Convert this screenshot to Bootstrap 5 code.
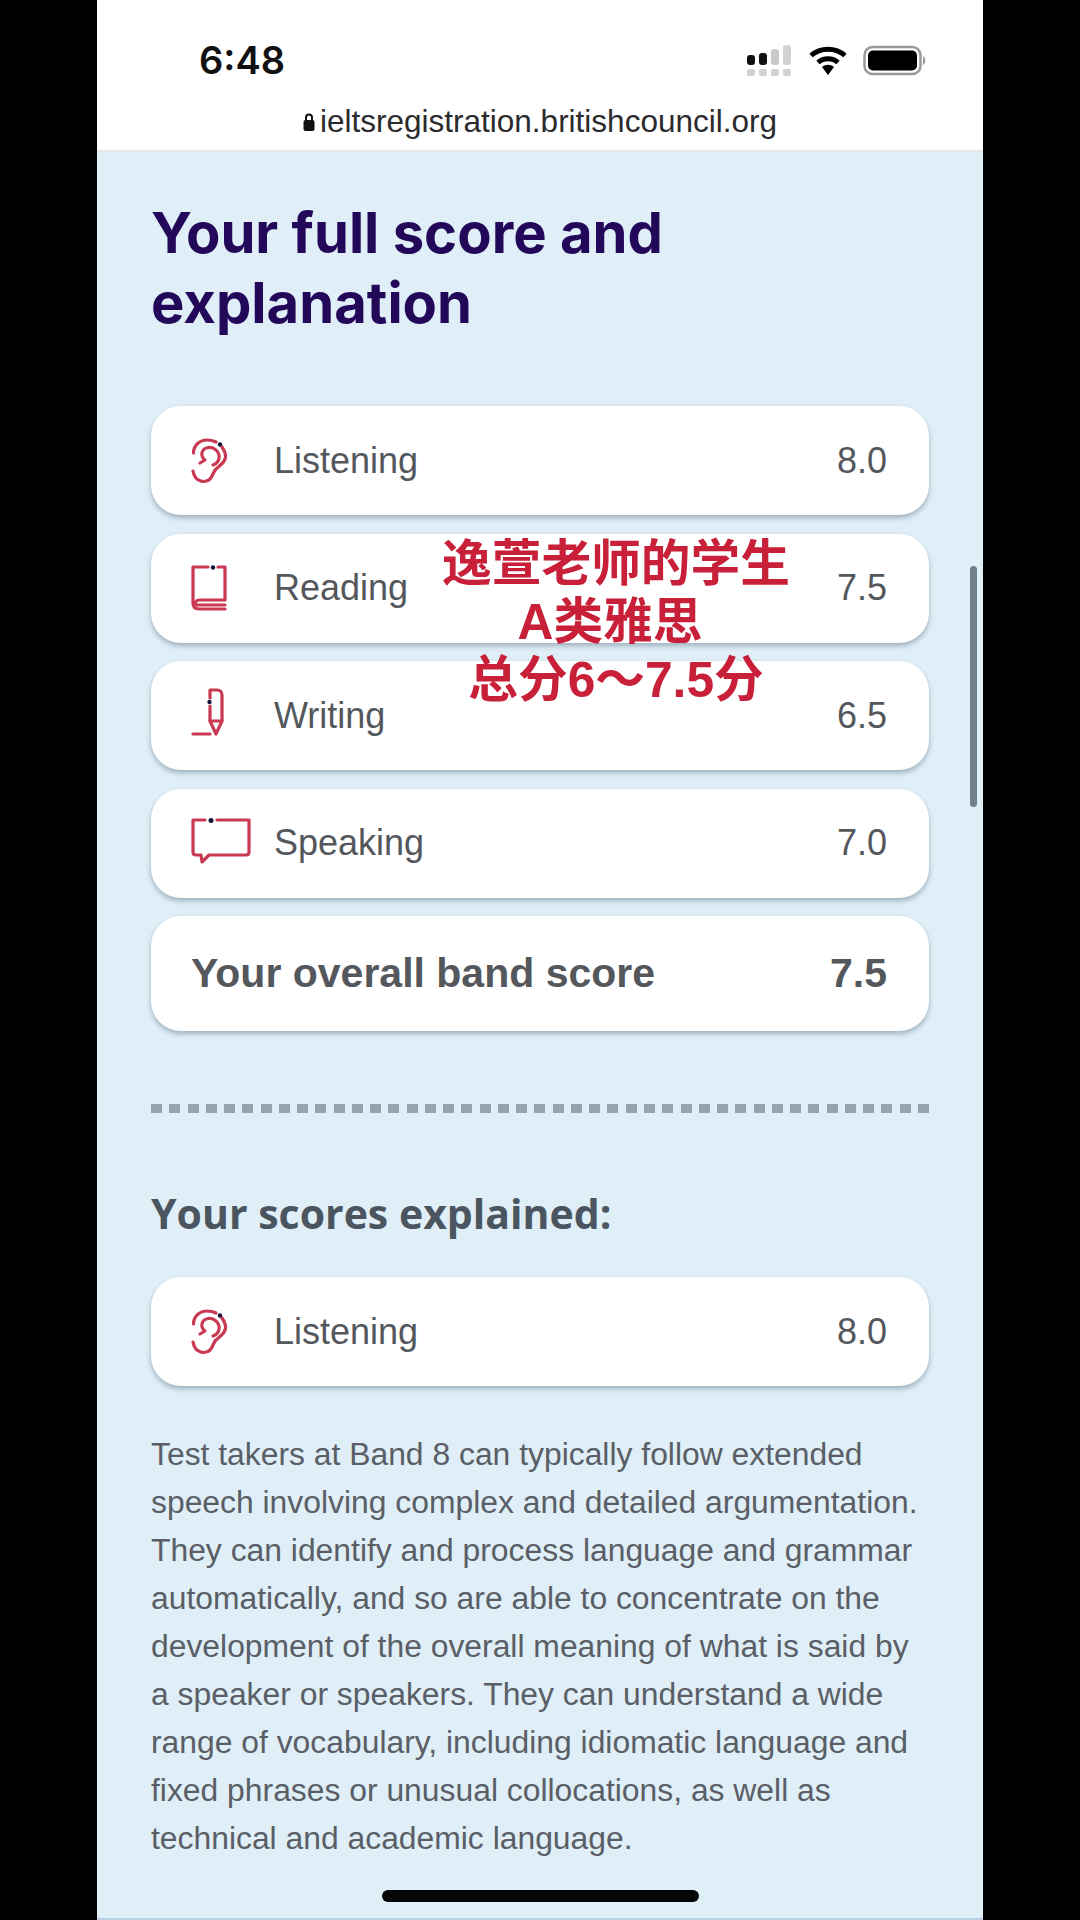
<!DOCTYPE html>
<html lang="en">
<head>
    <meta charset="UTF-8">
    <meta name="viewport" content="width=device-width, initial-scale=1.0">
    <title>IELTS score</title>
    <link href="https://cdn.jsdelivr.net/npm/bootstrap@5.3.0/dist/css/bootstrap.min.css" rel="stylesheet">
    <style>
        body { background: #000; font-family: "Liberation Sans", sans-serif; color: #54575c; }
        .phone { width: 886px; height: 1920px; margin-left: 97px; background: #dfeef7; position: relative; overflow: hidden; border-bottom: 2px solid #b9d0e2; }
        .top-bar { height: 152px; background: #fff; border-bottom: 2px solid #e3e8ea; }
        .status-row { height: 106px; padding: 41px 56px 0 102px; }
        .clock { font-family: Inter, sans-serif; font-weight: 600; font-size: 38px; line-height: 1; color: #111; }
        .url-row { font-size: 31.5px; line-height: 1; color: #2b2b2d; gap: 5px; }
        .content-area { padding: 0 54px; }
        .page-title { font-family: Inter, sans-serif; font-weight: 700; font-size: 56.2px; line-height: 70px; color: #23085a; margin: 46px 0 68px; }
        .score-list { gap: 18.5px; }
        .score-card { height: 109px; border: 0; border-radius: 30px; box-shadow: 0 3px 5px rgba(85, 105, 125, .45); padding: 0 42px 0 40px; font-size: 36px; }
        .score-card.total { height: 115px; font-size: 41px; font-weight: 700; }
        .icon-slot { width: 83px; flex: none; }
        .dash-line { height: 9px; margin: 73px 0 70px; background: repeating-linear-gradient(90deg, #95a3ad 0 11px, transparent 11px 18.26px); }
        .sub-title { font-weight: 700; font-size: 41px; line-height: 60px; color: #4b5560; margin-bottom: 34px; font-family: "Open Sans", sans-serif; }
        .band-text { font-size: 31.85px; line-height: 48px; margin: 44px 0 0; color: #5a5e66; }
        .red-note { position: absolute; left: 289px; top: 535px; width: 460px; font-family: "Liberation Sans", "Noto Sans CJK SC", sans-serif; font-weight: 700; font-size: 49.7px; line-height: 58px; color: #c9203a; }
        .note-mid { margin-right: 12px; }
        .scroll-thumb { position: absolute; right: 6px; top: 566px; width: 7px; height: 241px; border-radius: 4px; background: #70808c; }
        .home-bar { position: absolute; left: 285px; top: 1890px; width: 317px; height: 12px; border-radius: 6px; background: #050507; }
        .ico { fill: none; stroke: #c93a52; stroke-width: 3.2; stroke-linecap: round; stroke-linejoin: round; display: block; }
        .ico circle { fill: #15163a; stroke: none; }
    </style>
</head>
<body>
    <div class="phone">
        <div class="top-bar">
            <div class="status-row d-flex justify-content-between align-items-start">
                <div class="clock">6:48</div>
                <div class="d-flex align-items-center gap-2 mt-1">
                    <svg width="46" height="32" viewBox="0 0 46 32">
                        <rect x="0" y="10" width="8" height="10" rx="3" fill="#111"/>
                        <rect x="12" y="8" width="8" height="12" rx="3" fill="#111"/>
                        <rect x="24" y="4" width="8" height="16" rx="3" fill="#c9c9c9"/>
                        <rect x="36" y="0" width="8" height="20" rx="3" fill="#d2d2d2"/>
                        <rect x="0" y="24" width="8" height="7" rx="2" fill="#d2d2d2"/>
                        <rect x="12" y="24" width="8" height="7" rx="2" fill="#d2d2d2"/>
                        <rect x="24" y="24" width="8" height="7" rx="2" fill="#d2d2d2"/>
                        <rect x="36" y="24" width="8" height="7" rx="2" fill="#d2d2d2"/>
                    </svg>
                    <svg class="ms-2" width="38" height="30" viewBox="0 0 38 30">
                        <path d="M2 9.500C11.500 1 26.500 1 36 9.500" fill="none" stroke="#000" stroke-width="5"/>
                        <path d="M9 16.500C14.500 11.500 23.500 11.500 29 16.500" fill="none" stroke="#000" stroke-width="5"/>
                        <path d="M13 21C16.500 18 21.500 18 25 21L19 29Z" fill="#000"/>
                    </svg>
                    <svg class="ms-2" width="64" height="32" viewBox="0 0 64 32">
                        <rect x="1.500" y="2" width="56" height="27" rx="8" fill="none" stroke="#9a9a9a" stroke-width="2.500"/>
                        <rect x="5" y="5.500" width="49" height="20" rx="5" fill="#000"/>
                        <path d="M60 11C63 12 63 19 60 20Z" fill="#999"/>
                    </svg>
                </div>
            </div>
            <div class="url-row d-flex justify-content-center align-items-center">
                <svg width="12" height="20" viewBox="0 0 12 20">
                    <path d="M3 9V5.500C3 1.500 9 1.500 9 5.500V9" fill="none" stroke="#111" stroke-width="2"/>
                    <rect x="0.500" y="8" width="11" height="11" rx="2" fill="#111"/>
                </svg>
                <span>ieltsregistration.britishcouncil.org</span>
            </div>
        </div>

        <div class="content-area">
            <h1 class="page-title">Your full score and<br>explanation</h1>

            <div class="score-list d-flex flex-column">
                <div class="score-card card flex-row align-items-center">
                    <div class="icon-slot">
                        <svg class="ico" width="37" height="46" viewBox="0 0 37 46">
                            <path d="M2.500 15C2.500 7 9 2 16 2C20 2 23 3 25 4"/>
                            <path d="M31 9C33 12 35 15 34.500 19C34 25 28 28 25 31C22 34 22 38 19 41C15 45 4 45 2 33"/>
                            <path d="M9 25L14 22C9 18 10 11 17 9.500C23 8.500 29 14 28 20C27.500 24 25 26 22 27"/>
                            <circle cx="29" cy="6.500" r="2.200"/>
                        </svg>
                    </div>
                    <span class="flex-grow-1">Listening</span>
                    <span>8.0</span>
                </div>
                <div class="score-card card flex-row align-items-center">
                    <div class="icon-slot">
                        <svg class="ico" width="36" height="46" viewBox="0 0 36 46">
                            <path d="M17 2H2V38C2 42 4 44 8 44H34"/>
                            <path d="M27 2H34V35H9C4 35 3 39 6 40H34"/>
                            <circle cx="22" cy="2.500" r="2.200"/>
                        </svg>
                    </div>
                    <span class="flex-grow-1">Reading</span>
                    <span>7.5</span>
                </div>
                <div class="score-card card flex-row align-items-center">
                    <div class="icon-slot">
                        <svg class="ico mb-2" width="36" height="48" viewBox="0 0 36 48">
                            <path d="M2 46H19"/>
                            <path d="M19 10V2H26C29 2 31 4 31 7V33L25 46L19 33V18"/>
                            <path d="M19 33H31"/>
                            <circle cx="18.500" cy="14" r="2.200"/>
                        </svg>
                    </div>
                    <span class="flex-grow-1">Writing</span>
                    <span>6.5</span>
                </div>
                <div class="score-card card flex-row align-items-center">
                    <div class="icon-slot">
                        <svg class="ico mb-1" width="60" height="46" viewBox="0 0 60 46">
                            <path d="M14 2H2V34C2 36 3 37 5 37H10L11 44L18 37H55C57 37 58 36 58 34V2H26"/>
                            <circle cx="20" cy="2.500" r="2.500"/>
                        </svg>
                    </div>
                    <span class="flex-grow-1">Speaking</span>
                    <span>7.0</span>
                </div>
                <div class="score-card total card flex-row align-items-center justify-content-between">
                    <span>Your overall band score</span>
                    <span>7.5</span>
                </div>
            </div>

            <div class="dash-line"></div>

            <div class="sub-title">Your scores explained:</div>

            <div class="score-card card flex-row align-items-center">
                <div class="icon-slot">
                    <svg class="ico" width="37" height="46" viewBox="0 0 37 46">
                        <path d="M2.500 15C2.500 7 9 2 16 2C20 2 23 3 25 4"/>
                        <path d="M31 9C33 12 35 15 34.500 19C34 25 28 28 25 31C22 34 22 38 19 41C15 45 4 45 2 33"/>
                        <path d="M9 25L14 22C9 18 10 11 17 9.500C23 8.500 29 14 28 20C27.500 24 25 26 22 27"/>
                        <circle cx="29" cy="6.500" r="2.200"/>
                    </svg>
                </div>
                <span class="flex-grow-1">Listening</span>
                <span>8.0</span>
            </div>

            <p class="band-text">Test takers at Band 8 can typically follow extended speech involving complex and detailed argumentation. They can identify and process language and grammar automatically, and so are able to concentrate on the development of the overall meaning of what is said by a speaker or speakers. They can understand a wide range of vocabulary, including idiomatic language and fixed phrases or unusual collocations, as well as technical and academic language.</p>
        </div>

        <div class="red-note text-center">逸萱老师的学生<br><span class="note-mid">A类雅思</span><br>总分6～7.5分</div>
        <div class="scroll-thumb"></div>
        <div class="home-bar"></div>
    </div>

    <script src="https://cdn.jsdelivr.net/npm/bootstrap@5.3.0/dist/js/bootstrap.bundle.min.js"></script>
</body>
</html>
